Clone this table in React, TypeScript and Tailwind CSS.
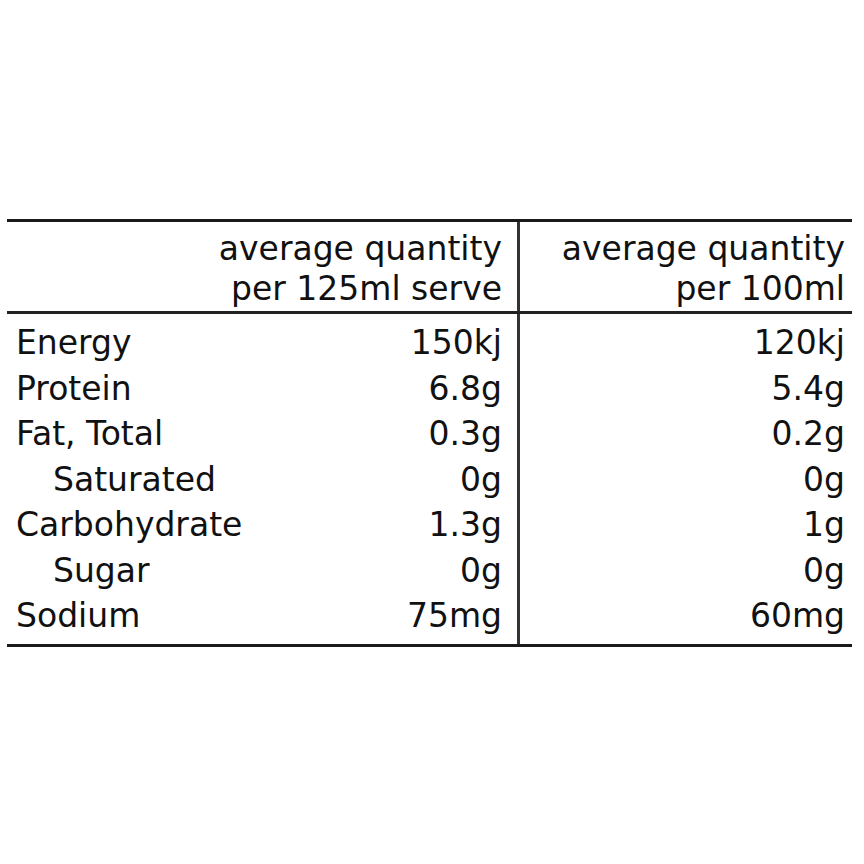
import React from 'react';

const rows = [
  { name: 'Energy', serve: '150kj', per100: '120kj' },
  { name: 'Protein', serve: '6.8g', per100: '5.4g' },
  { name: 'Fat, Total', serve: '0.3g', per100: '0.2g' },
  { name: 'Saturated', serve: '0g', per100: '0g', sub: true },
  { name: 'Carbohydrate', serve: '1.3g', per100: '1g' },
  { name: 'Sugar', serve: '0g', per100: '0g', sub: true },
  { name: 'Sodium', serve: '75mg', per100: '60mg' },
];

const App: React.FC = () => {
  return (
    <div
      className="w-[864px] h-[864px] bg-white text-[#111] pt-[219px] pl-[7px]"
      style={{ fontFamily: '"DejaVu Sans", sans-serif' }}
    >
      <div className="w-[845px] border-t-[3px] border-b-[3px] border-[#1a1a1a] text-[33px]">
        {/* header */}
        <div className="grid grid-cols-[513px_1fr] border-b-[3px] border-[#222]">
          <div className="border-r-[3px] border-[#333] pr-[15px] pt-[7px] pb-[2px] text-right leading-[40px]">
            <div>average quantity</div>
            <div>per 125ml serve</div>
          </div>
          <div className="pr-[7px] pt-[7px] pb-[2px] text-right leading-[40px]">
            <div>average quantity</div>
            <div>per 100ml</div>
          </div>
        </div>

        {/* values */}
        <div className="grid grid-cols-[513px_1fr]">
          <div className="border-r-[3px] border-[#333] pt-[6px] pb-[5px] leading-[45.5px]">
            {rows.map((r) => (
              <div key={r.name} className="flex justify-between pl-[9px] pr-[15px]">
                <span className={r.sub ? 'pl-[37px]' : ''}>{r.name}</span>
                <span>{r.serve}</span>
              </div>
            ))}
          </div>
          <div className="pt-[6px] pb-[5px] pr-[7px] text-right leading-[45.5px]">
            {rows.map((r) => (
              <div key={r.name}>{r.per100}</div>
            ))}
          </div>
        </div>
      </div>
    </div>
  );
};

export default App;
